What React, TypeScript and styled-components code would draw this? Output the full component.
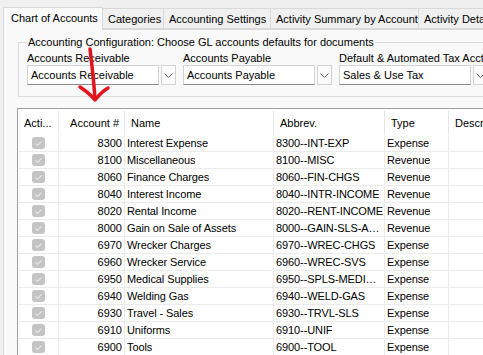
import React from 'react';
import styled, { createGlobalStyle } from 'styled-components';

const GlobalStyle = createGlobalStyle`
  html, body {
    margin: 0;
    padding: 0;
    background: #f0f0f0;
    font-family: "Liberation Sans", Arial, sans-serif;
    font-size: 11px;
    color: #000;
  }
`;

const Window = styled.div`
  position: relative;
  width: 483px;
  height: 355px;
  overflow: hidden;
  background: #f0f0f0;
`;

const TabStrip = styled.div`
  display: flex;
  align-items: flex-end;
  height: 29px;
  padding-left: 3px;
  white-space: nowrap;
`;

const Tab = styled.div<{ active?: boolean; w: number }>`
  position: relative;
  z-index: ${({ active }) => (active ? 2 : 1)};
  flex: none;
  width: ${({ w }) => w}px;
  height: ${({ active }) => (active ? 23 : 21)}px;
  box-sizing: border-box;
  border: 1px solid #d9d9d9;
  border-bottom: ${({ active }) => (active ? 'none' : '1px solid #d9d9d9')};
  margin-left: ${({ active }) => (active ? 0 : -1)}px;
  margin-bottom: ${({ active }) => (active ? -1 : 0)}px;
  background: ${({ active }) => (active ? '#f9f9f9' : '#f0f0f0')};
  padding: ${({ active }) => (active ? '3px 0 0 7px' : '3px 0 0 5px')};
  line-height: 14px;
  overflow: hidden;
`;

const Panel = styled.div`
  margin-left: 3px;
  width: 600px;
  height: 400px;
  box-sizing: border-box;
  border: 1px solid #d9d9d9;
  background: #f9f9f9;
  padding: 5px 0 0 14px;
`;

const Group = styled.fieldset`
  margin: 0;
  width: 560px;
  box-sizing: border-box;
  border: 1px solid #dcdcdc;
  padding: 2px 0 11px 8px;
  display: flex;
  gap: 7px;
`;

const Legend = styled.legend`
  padding: 0 1px;
  line-height: 14px;
`;

const Field = styled.div`
  display: flex;
  flex-direction: column;
  width: 149px;
  flex: none;
`;

const FieldLabel = styled.div`
  line-height: 14px;
  white-space: nowrap;
`;

const ComboRow = styled.div`
  display: flex;
  gap: 2px;
  height: 20px;
`;

const ComboText = styled.div`
  width: 132px;
  flex: none;
  box-sizing: border-box;
  background: #fff;
  border: 1px solid #d3d3d3;
  border-bottom-color: #8a8a8a;
  padding-left: 3px;
  line-height: 18px;
  white-space: nowrap;
  overflow: hidden;
`;

const ComboButton = styled.div`
  width: 15px;
  flex: none;
  box-sizing: border-box;
  background: #fbfbfb;
  border: 1px solid #d3d3d3;
  display: flex;
  align-items: center;
  justify-content: center;
`;

const Grid = styled.div`
  margin: 11px 0 0 -1px;
  width: 600px;
  background: #fff;
  border-top: 1px solid #a0a0a0;
  border-left: 1px solid #a0a0a0;
`;

const cols = '41px 66px 149px 111px 64px 200px';

const HeaderRow = styled.div`
  display: grid;
  grid-template-columns: ${cols};
  height: 26px;
`;

const HeaderCell = styled.div<{ right?: boolean }>`
  display: flex;
  align-items: center;
  justify-content: ${({ right }) => (right ? 'flex-end' : 'flex-start')};
  padding: ${({ right }) => (right ? '0 5px 0 0' : '0 0 0 6px')};
  margin: 2px 0 1px;
  border-right: 1px solid #e5e5e5;
  white-space: nowrap;
  overflow: hidden;
`;

const Row = styled.div`
  display: grid;
  grid-template-columns: ${cols};
  height: 17px;
`;

const Cell = styled.div<{ right?: boolean; center?: boolean }>`
  display: flex;
  align-items: center;
  justify-content: ${({ right, center }) => (center ? 'center' : right ? 'flex-end' : 'flex-start')};
  padding: ${({ right, center }) => (center ? '0' : right ? '0 2px 0 0' : '0 0 0 2px')};
  min-width: 0;
  border-right: 1px solid #ebebeb;
  border-bottom: 1px solid #ebebeb;
  white-space: nowrap;
  overflow: hidden;
`;

const CellText = styled.span`
  display: block;
  min-width: 0;
  overflow: hidden;
  text-overflow: ellipsis;
  white-space: nowrap;
  letter-spacing: -0.1px;
`;

const Check = styled.div`
  width: 13px;
  height: 12px;
  border-radius: 3px;
  background: #c4c4c4;
  display: flex;
  align-items: center;
  justify-content: center;
`;

const Arrow = styled.svg`
  position: absolute;
  left: 0;
  top: 0;
  pointer-events: none;
`;

const Chevron = () => (
  <svg width="9" height="5" viewBox="0 0 9 5">
    <path d="M0.5 0.5 L4.5 4.5 L8.5 0.5" fill="none" stroke="#606060" strokeWidth="1" />
  </svg>
);

const Tick = () => (
  <svg width="9" height="7" viewBox="0 0 9 7">
    <path d="M1.5 3.5 L3.5 5.5 L7.5 1.5" fill="none" stroke="#e4e4e4" strokeWidth="1.2" />
  </svg>
);

const tabs = [
  { label: 'Chart of Accounts', w: 100, active: true },
  { label: 'Categories', w: 62 },
  { label: 'Accounting Settings', w: 108 },
  { label: 'Activity Summary by Account', w: 149 },
  { label: 'Activity Detail', w: 100 },
];

const fields = [
  { label: 'Accounts Receivable', value: 'Accounts Receivable' },
  { label: 'Accounts Payable', value: 'Accounts Payable' },
  { label: 'Default & Automated Tax Acct', value: 'Sales & Use Tax' },
];

const accounts = [
  ['8300', 'Interest Expense', '8300--INT-EXP', 'Expense'],
  ['8100', 'Miscellaneous', '8100--MISC', 'Revenue'],
  ['8060', 'Finance Charges', '8060--FIN-CHGS', 'Revenue'],
  ['8040', 'Interest Income', '8040--INTR-INCOME', 'Revenue'],
  ['8020', 'Rental Income', '8020--RENT-INCOME', 'Revenue'],
  ['8000', 'Gain on Sale of Assets', '8000--GAIN-SLS-ASSETS', 'Revenue'],
  ['6970', 'Wrecker Charges', '6970--WREC-CHGS', 'Expense'],
  ['6960', 'Wrecker Service', '6960--WREC-SVS', 'Expense'],
  ['6950', 'Medical Supplies', '6950--SPLS-MEDICAL', 'Expense'],
  ['6940', 'Welding Gas', '6940--WELD-GAS', 'Expense'],
  ['6930', 'Travel - Sales', '6930--TRVL-SLS', 'Expense'],
  ['6910', 'Uniforms', '6910--UNIF', 'Expense'],
  ['6900', 'Tools', '6900--TOOL', 'Expense'],
];

const App: React.FC = () => (
  <Window>
    <GlobalStyle />
    <TabStrip>
      {tabs.map(t => (
        <Tab key={t.label} active={t.active} w={t.w}>
          {t.label}
        </Tab>
      ))}
    </TabStrip>
    <Panel>
      <Group>
        <Legend>Accounting Configuration: Choose GL accounts defaults for documents</Legend>
        {fields.map(f => (
          <Field key={f.label}>
            <FieldLabel>{f.label}</FieldLabel>
            <ComboRow>
              <ComboText>{f.value}</ComboText>
              <ComboButton>
                <Chevron />
              </ComboButton>
            </ComboRow>
          </Field>
        ))}
      </Group>
      <Grid>
        <HeaderRow>
          <HeaderCell>Acti...</HeaderCell>
          <HeaderCell right>Account #</HeaderCell>
          <HeaderCell>Name</HeaderCell>
          <HeaderCell>Abbrev.</HeaderCell>
          <HeaderCell>Type</HeaderCell>
          <HeaderCell>Description</HeaderCell>
        </HeaderRow>
        {accounts.map(([num, name, abbr, type]) => (
          <Row key={num}>
            <Cell center>
              <Check>
                <Tick />
              </Check>
            </Cell>
            <Cell right>{num}</Cell>
            <Cell>
              <CellText>{name}</CellText>
            </Cell>
            <Cell>
              <CellText>{abbr}</CellText>
            </Cell>
            <Cell>
              <CellText>{type}</CellText>
            </Cell>
            <Cell />
          </Row>
        ))}
      </Grid>
    </Panel>
    <Arrow width="483" height="355">
      <g fill="none" stroke="#e3131b" strokeWidth="3.5" strokeLinecap="round" strokeLinejoin="round">
        <path d="M90 49 C 92 66, 94 82, 95 99" />
        <path d="M80 87 C 86 91, 91 95, 95 100 C 99 95, 103 91, 108 88" />
      </g>
    </Arrow>
  </Window>
);

export default App;
